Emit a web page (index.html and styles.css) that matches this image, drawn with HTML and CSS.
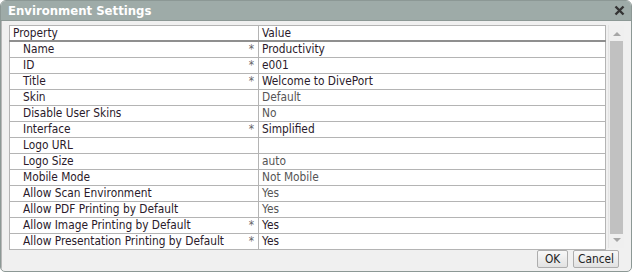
FILE: index.html
```html
<!DOCTYPE html>
<html lang="en">
<head>
  <meta charset="UTF-8" />
  <title>Environment Settings</title>
  <link rel="stylesheet" href="styles.css">
</head>
<body>
  <div class="dialog">
    <div class="titlebar">
      <span class="title">Environment Settings</span>
      <svg class="close" width="11" height="11" viewBox="0 0 11 11">
        <path d="M1.5 1.5 L9.5 9.5 M9.5 1.5 L1.5 9.5" stroke="#333" stroke-width="2.4" fill="none" />
      </svg>
    </div>
    <div class="content">
      <div class="grid-wrap">
        <table class="grid">
          <thead>
            <tr><th class="prop">Property</th><th class="val">Value</th></tr>
          </thead>
          <tbody>
            <tr><td class="prop">Name<span class="req">*</span></td><td class="val">Productivity</td></tr>
            <tr><td class="prop">ID<span class="req">*</span></td><td class="val">e001</td></tr>
            <tr><td class="prop">Title<span class="req">*</span></td><td class="val">Welcome to DivePort</td></tr>
            <tr><td class="prop">Skin</td><td class="val def">Default</td></tr>
            <tr><td class="prop">Disable User Skins</td><td class="val def">No</td></tr>
            <tr><td class="prop">Interface<span class="req">*</span></td><td class="val">Simplified</td></tr>
            <tr><td class="prop">Logo URL</td><td class="val"></td></tr>
            <tr><td class="prop">Logo Size</td><td class="val def">auto</td></tr>
            <tr><td class="prop">Mobile Mode</td><td class="val def">Not Mobile</td></tr>
            <tr><td class="prop">Allow Scan Environment</td><td class="val def">Yes</td></tr>
            <tr><td class="prop">Allow PDF Printing by Default</td><td class="val def">Yes</td></tr>
            <tr><td class="prop">Allow Image Printing by Default<span class="req">*</span></td><td class="val">Yes</td></tr>
            <tr><td class="prop">Allow Presentation Printing by Default<span class="req">*</span></td><td class="val">Yes</td></tr>
          </tbody>
        </table>
        <!-- scrollbar -->
        <div class="scrollbar">
          <div class="arrow up"></div>
          <div class="thumb"></div>
          <div class="arrow down"></div>
        </div>
      </div>
      <div class="buttons">
        <button class="btn">OK</button>
        <button class="btn">Cancel</button>
      </div>
    </div>
  </div>
</body>
</html>
```

FILE: styles.css
```css
* {
  box-sizing: border-box;
}
body {
  margin: 0;
  background: white;
  font-family: "DejaVu Sans Condensed", "DejaVu Sans", sans-serif;
  font-size: 11.8px;
}
.dialog {
  width: 632px;
  height: 272px;
  border: 1px solid #8c9895;
  border-radius: 6px 6px 5px 5px;
  overflow: hidden;
  background: #f0f0f0;
  display: flex;
  flex-direction: column;
}
.titlebar {
  height: 20px;
  background: #9eaba8;
  border-bottom: 1px solid #8c9895;
  display: flex;
  align-items: center;
  justify-content: space-between;
  padding: 0 6px 0 7px;
}
.title {
  color: white;
  font-weight: bold;
  font-size: 13px;
}
.close {
  display: block;
}
.content {
  flex: 1;
  padding: 4px 7px 0 7px;
  border-left: 1px solid #b8b8b8;
}
.grid-wrap {
  display: flex;
  align-items: flex-start;
  gap: 2px;
}
.grid {
  width: 599px;
  border-collapse: collapse;
  background: white;
  border: 1px solid #a8a8a8;
  table-layout: fixed;
}
.grid th, .grid td {
  height: 16px;
  padding: 0 3px;
  border: 1px solid #b4b4b4;
  text-align: left;
  font-weight: normal;
  color: #2a1a2a;
  white-space: nowrap;
  line-height: 14px;
}
.grid th {
  height: 15px;
  border-bottom: 2px solid #8f8f8f;
}
.grid th.prop {
  width: 249px;
}
.grid td.prop {
  padding-left: 13px;
}
.req {
  float: right;
  color: #666;
  padding-right: 1px;
}
.grid td.def {
  color: #555;
}
.scrollbar {
  width: 16px;
  height: 223px;
  background: #efefef;
  border-left: 1px solid #e4e4e4;
  display: flex;
  flex-direction: column;
  align-items: center;
  padding: 7px 0 6px 0;
}
.arrow {
  width: 0;
  height: 0;
  border-left: 4px solid transparent;
  border-right: 4px solid transparent;
}
.arrow.up {
  border-bottom: 4px solid #a6a6a6;
  margin-bottom: 5px;
}
.arrow.down {
  border-top: 4px solid #a6a6a6;
  margin-top: 4px;
}
.thumb {
  flex: 1;
  width: 13px;
  background: #c1c1c1;
}
.buttons {
  display: flex;
  justify-content: flex-end;
  gap: 5px;
  padding: 0 5px 0 0;
  margin-top: 0;
}
.btn {
  font-family: inherit;
  font-size: 11.8px;
  height: 18px;
  padding: 0 4px;
  border: 1px solid #adadad;
  border-radius: 2px;
  background: linear-gradient(#f8f8f8, #e2e2e2);
  color: #222;
}
.btn:first-child {
  width: 31px;
}
```
